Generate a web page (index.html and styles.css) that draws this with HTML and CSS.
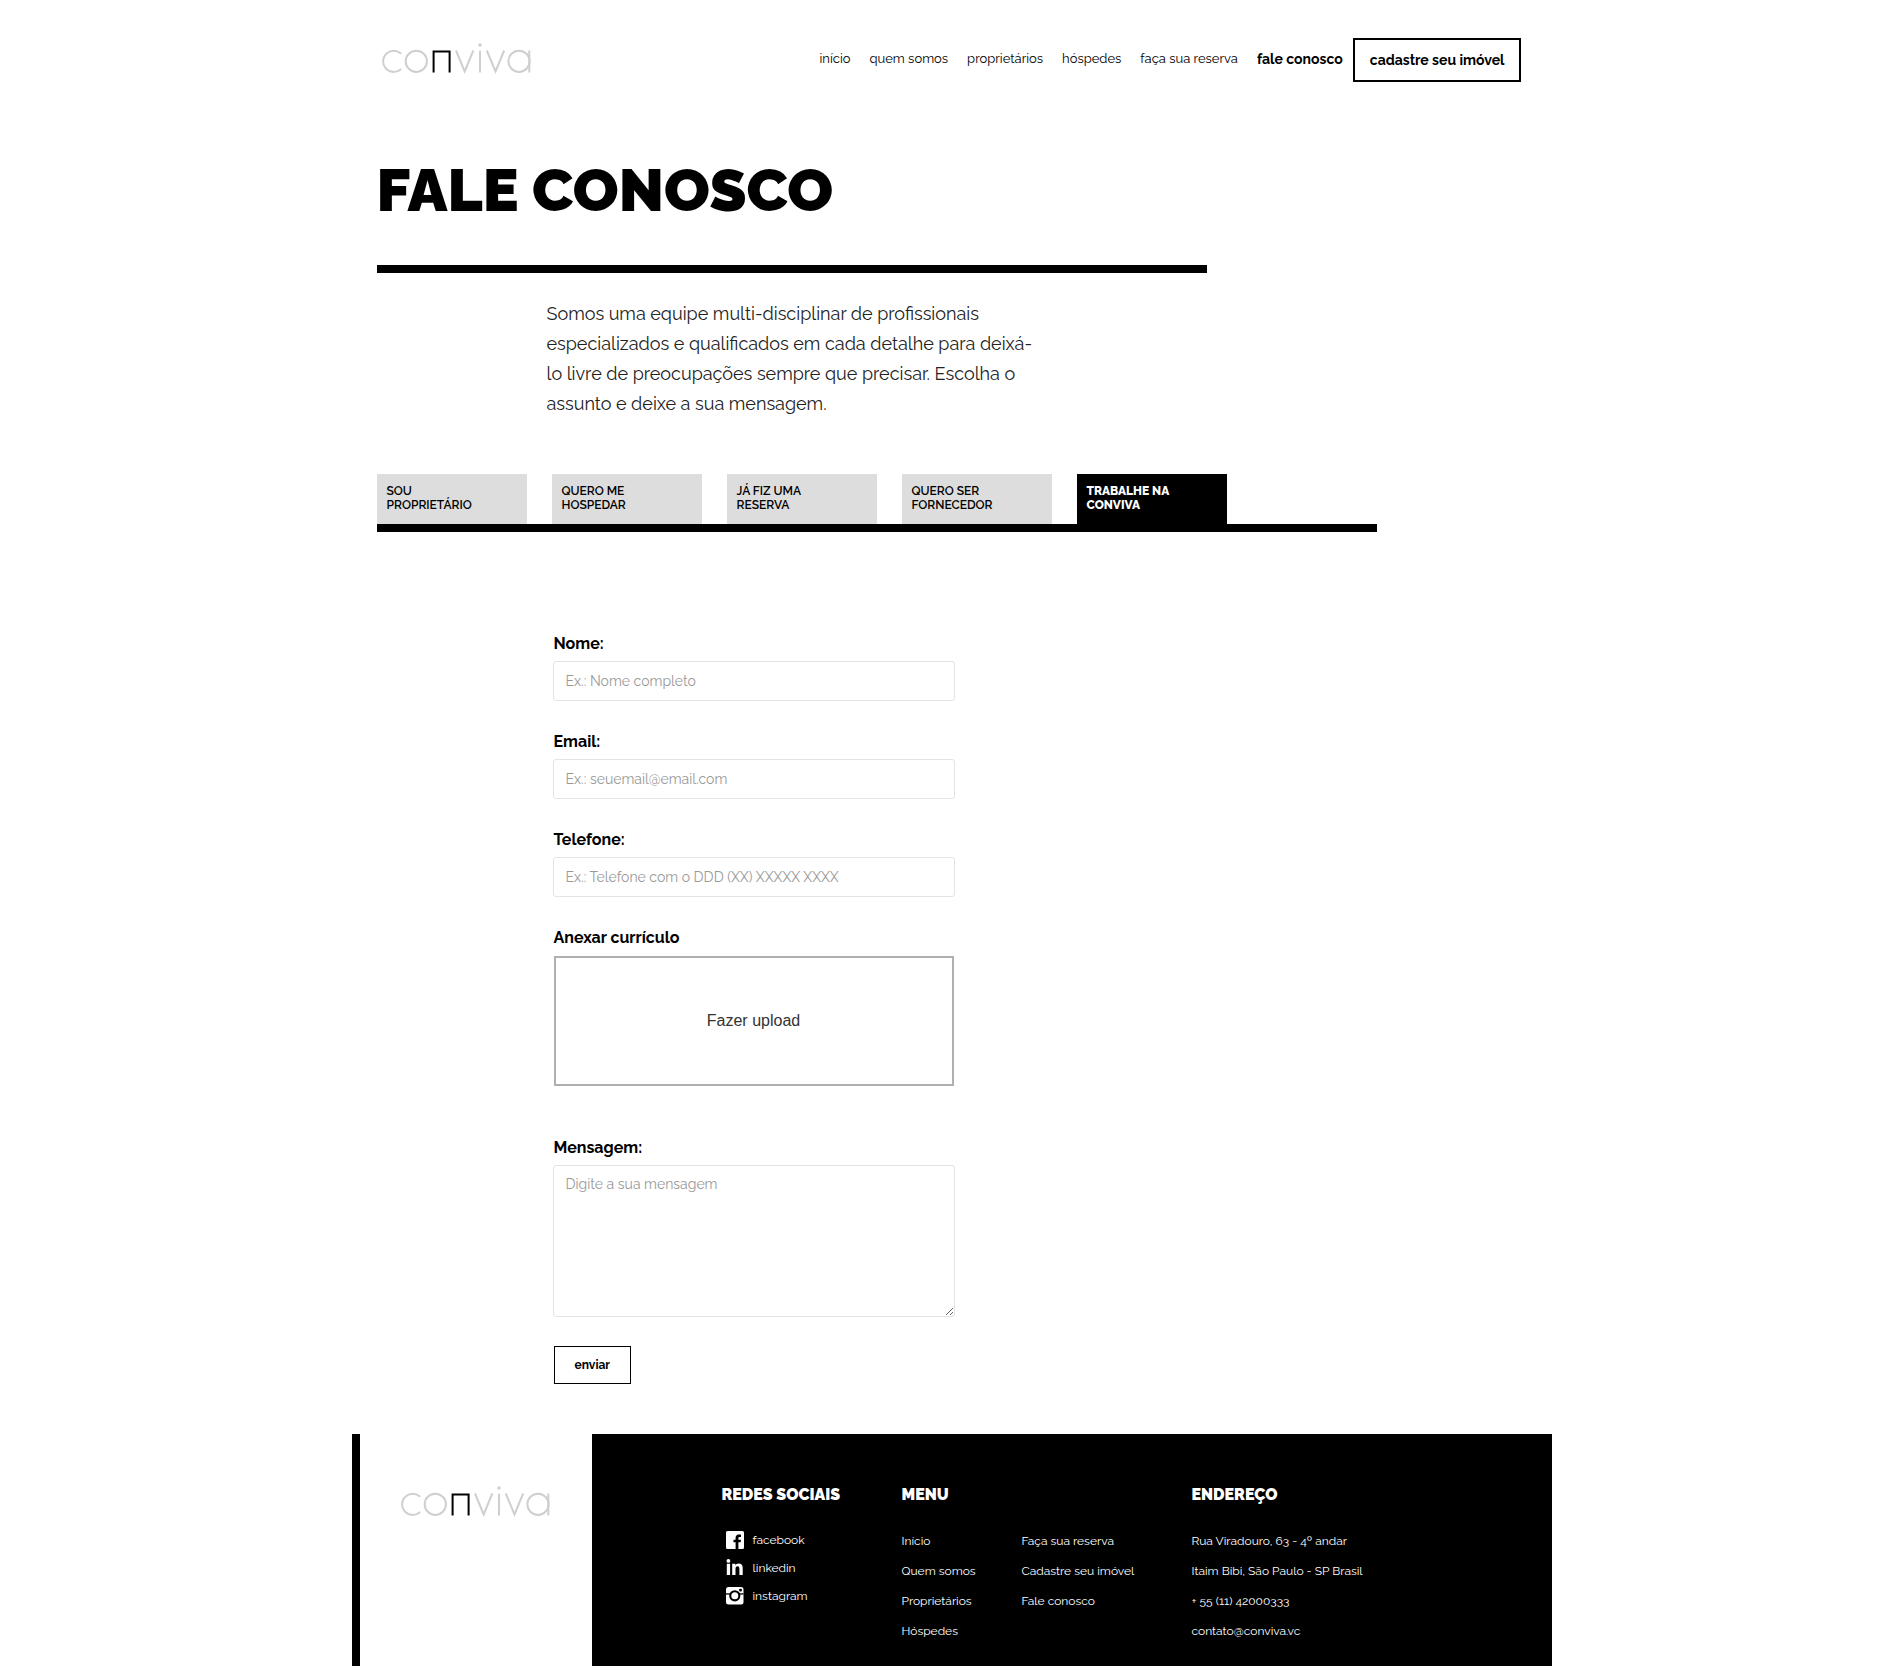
FILE: index.html
```html
<!DOCTYPE html>
<html lang="pt-BR">
<head>
  <meta charset="utf-8">
  <meta name="viewport" content="width=device-width, initial-scale=1">
  <title>Fale conosco</title>
  <link rel="stylesheet" href="styles.css">
</head>
<body>
  <svg class="sprite" aria-hidden="true">
    <symbol id="logo" viewBox="0 0 150 31">
      <g fill="none" stroke="#cfcfcf" stroke-width="2">
        <circle cx="11.7" cy="18.3" r="10.6" stroke-dasharray="260 100" pathLength="360" transform="rotate(50 11.7 18.3)" stroke-linecap="round"/>
        <circle cx="34.3" cy="18.3" r="10.6"/>
        <polyline points="74,7.5 82.7,28.5 91.3,7.5"/>
        <line x1="98" y1="7.7" x2="98" y2="29.5"/>
        <polyline points="104.8,7.5 113.5,28.5 122.2,7.5"/>
        <circle cx="137" cy="18.3" r="10.6"/>
        <line x1="147.3" y1="7.5" x2="147.3" y2="29.5"/>
      </g>
      <circle cx="98" cy="2" r="1.7" fill="#cfcfcf"/>
      <polyline points="51.6,29.5 51.6,8.4 67.6,8.4 67.6,29.5" fill="none" stroke="#000" stroke-width="2"/>
    </symbol>
  </svg>

  <div class="page">
    <header class="header">
      <a class="logo" href="#" aria-label="conviva"><svg width="150" height="31"><use href="#logo"/></svg></a>
      <nav class="nav">
        <a href="#">início</a>
        <a href="#">quem somos</a>
        <a href="#">proprietários</a>
        <a href="#">hóspedes</a>
        <a href="#">faça sua reserva</a>
        <a class="current" href="#">fale conosco</a>
        <a class="cta" href="#">cadastre seu imóvel</a>
      </nav>
    </header>

    <main class="main">
      <h1 class="title">FALE CONOSCO</h1>
      <p class="intro">Somos uma equipe multi-disciplinar de profissionais especializados e qualificados em cada detalhe para deixá-lo livre de preocupações sempre que precisar. Escolha o assunto e deixe a sua mensagem.</p>

      <div class="tabs">
        <button class="tab" type="button">SOU<br>PROPRIETÁRIO</button>
        <button class="tab" type="button">QUERO ME<br>HOSPEDAR</button>
        <button class="tab" type="button">JÁ FIZ UMA<br>RESERVA</button>
        <button class="tab" type="button">QUERO SER<br>FORNECEDOR</button>
        <button class="tab active" type="button">TRABALHE NA<br>CONVIVA</button>
      </div>

      <form class="form">
        <div class="field">
          <label for="nome">Nome:</label>
          <input id="nome" type="text" placeholder="Ex.: Nome completo">
        </div>
        <div class="field">
          <label for="email">Email:</label>
          <input id="email" type="email" placeholder="Ex.: seuemail@email.com">
        </div>
        <div class="field">
          <label for="telefone">Telefone:</label>
          <input id="telefone" type="tel" placeholder="Ex.: Telefone com o DDD (XX) XXXXX XXXX">
        </div>
        <div class="field attach">
          <label for="upload">Anexar currículo</label>
          <button id="upload" class="upload" type="button">Fazer upload</button>
        </div>
        <div class="field message">
          <label for="mensagem">Mensagem:</label>
          <textarea id="mensagem" placeholder="Digite a sua mensagem"></textarea>
        </div>
        <button class="send" type="submit">enviar</button>
      </form>
    </main>

    <footer class="footer">
      <div class="brand"><svg width="150" height="31" role="img" aria-label="conviva"><use href="#logo"/></svg></div>
      <section class="col social">
        <h2>REDES SOCIAIS</h2>
        <ul>
          <li><a href="#">
            <svg width="18" height="18" viewBox="0 0 18 18"><path fill="#fff" fill-rule="evenodd" d="M1.500 0h15A1.500 1.500 0 0 1 18 1.500v15a1.500 1.500 0 0 1-1.500 1.500H12.400V11.300h2.200l.4-2.500h-2.600V7.200c0-.8.400-1.200 1.200-1.200H15V3.500h-2.200C10.700 3.500 9.600 4.800 9.600 6.800v2H7.500v2.500h2.100V18H1.500A1.500 1.500 0 0 1 0 16.500v-15A1.500 1.500 0 0 1 1.500 0z"/></svg>
            facebook</a></li>
          <li><a href="#">
            <svg width="18" height="18" viewBox="0 0 18 18"><g fill="#fff"><circle cx="2.400" cy="1.900" r="1.900"/><path d="M.8 4.700h3.300V16H.8zM6.200 4.700h3.100v1.500c.6-1 1.700-1.800 3.300-1.800 3 0 4.100 1.900 4.100 4.900V16h-3.300v-5.900c0-1.700-.5-2.800-1.800-2.800-1.500 0-2.100 1.100-2.100 2.800V16H6.200z"/></g></svg>
            linkedin</a></li>
          <li><a href="#">
            <svg width="18" height="18" viewBox="0 0 18 18"><rect x="0" y="0" width="17.500" height="17.500" rx="2.500" fill="#fff"/><path d="M0 6.300h17.500v1.300H0z" fill="#000"/><circle cx="8.800" cy="8.800" r="5.600" fill="#000"/><circle cx="8.800" cy="8.800" r="3.500" fill="#fff"/><rect x="13.200" y="1.700" width="2.700" height="2.700" rx=".8" fill="#000"/></svg>
            instagram</a></li>
        </ul>
      </section>
      <section class="col menu">
        <h2>MENU</h2>
        <div class="menu-lists">
          <ul>
            <li><a href="#">Início</a></li>
            <li><a href="#">Quem somos</a></li>
            <li><a href="#">Proprietários</a></li>
            <li><a href="#">Hóspedes</a></li>
          </ul>
          <ul>
            <li><a href="#">Faça sua reserva</a></li>
            <li><a href="#">Cadastre seu imóvel</a></li>
            <li><a href="#">Fale conosco</a></li>
          </ul>
        </div>
      </section>
      <section class="col address">
        <h2>ENDEREÇO</h2>
        <ul>
          <li>Rua Viradouro, 63 - 4º andar</li>
          <li>Itaim Bibi, São Paulo - SP Brasil</li>
          <li>+ 55 (11) 42000333</li>
          <li><a href="#">contato@conviva.vc</a></li>
        </ul>
      </section>
    </footer>
  </div>
</body>
</html>
```
FILE: styles.css
```css
* {
  box-sizing: border-box;
}

body {
  margin: 0;
  background: #fff;
  color: #000;
  font-family: Raleway, Inter, "Liberation Sans", sans-serif;
}

a {
  color: inherit;
  text-decoration: none;
}

h1, h2, p, ul {
  margin: 0;
  padding: 0;
}

ul {
  list-style: none;
}

svg {
  display: block;
  flex: none;
}

.sprite {
  position: absolute;
  width: 0;
  height: 0;
}

.page {
  max-width: 1200px;
  margin: 0 auto;
  padding-bottom: 8px;
}

/* Header */
.header {
  display: flex;
  justify-content: space-between;
  align-items: center;
  padding: 38px 31px 0 30px;
}

.logo {
  padding-bottom: 4px;
}

.nav {
  display: flex;
  align-items: center;
  gap: 19px;
  font-size: 13px;
  font-weight: 400;
  line-height: 20px;
}

.nav a {
  padding-bottom: 2px;
}

.nav .current {
  margin-right: -9px;
  font-size: 14px;
  font-weight: 700;
}

.nav .cta {
  padding: 10px 14px 10px 15px;
  border: 2px solid #000;
  font-size: 14px;
  font-weight: 700;
}

/* Content */
.main {
  padding: 0 25px;
}

.title {
  max-width: 830px;
  padding: 72px 0 39px;
  border-bottom: 8px solid #000;
  font-size: 60px;
  font-weight: 900;
  line-height: 72px;
}

.intro {
  max-width: 490px;
  margin: 26px 0 55px 170px;
  color: #222;
  font-size: 18px;
  font-weight: 400;
  line-height: 30px;
}

.tabs {
  display: flex;
  gap: 25px;
  max-width: 1000px;
  border-bottom: 8px solid #000;
}

.tab {
  width: 150px;
  height: 50px;
  padding: 0 10px 2px;
  border: 0;
  background: #ddd;
  color: #000;
  font-family: inherit;
  font-size: 12px;
  font-weight: 600;
  line-height: 14px;
  text-align: left;
}

.tab.active {
  background: #000;
  color: #fff;
  font-weight: 800;
}

/* Form */
.form {
  max-width: 402px;
  margin: 102px 0 50px 176px;
}

.field {
  margin-bottom: 31px;
}

.field label {
  display: block;
  margin: 0 1px 7px;
  font-size: 16px;
  font-weight: 700;
  line-height: 20px;
}

.field input,
.field textarea {
  display: block;
  width: 100%;
  border: 1px solid #e3e3e3;
  border-radius: 3px;
  background: #fff;
  font-family: inherit;
  font-size: 14px;
  font-weight: 400;
  line-height: 18px;
}

.field input {
  height: 40px;
  padding: 0 12px;
}

.field textarea {
  height: 152px;
  padding: 9px 12px;
  resize: vertical;
}

::placeholder {
  color: #999;
  opacity: 1;
}

.field.attach {
  margin-bottom: 52px;
}

.field.message {
  margin-bottom: 29px;
}

.upload {
  display: block;
  width: calc(100% - 2px);
  height: 130px;
  margin: 8px 1px 0;
  border: 2px solid #b0b0b0;
  background: #fff;
  color: #333;
  font-family: "Liberation Sans", Arial, sans-serif;
  font-size: 16px;
}

.send {
  height: 38px;
  margin-left: 1px;
  padding: 0 20px;
  border: 1px solid #000;
  background: #fff;
  color: #000;
  font-family: inherit;
  font-size: 12px;
  font-weight: 700;
}

/* Footer */
.footer {
  display: flex;
  min-height: 232px;
  border-left: 8px solid #000;
  background: #000;
  color: #fff;
  font-size: 12px;
  font-weight: 400;
}

.brand {
  flex: none;
  width: 232px;
  padding: 52px 41px;
  background: #fff;
}

.col {
  flex: none;
  padding-top: 51px;
}

.col h2 {
  margin-bottom: 21px;
  font-size: 16px;
  font-weight: 900;
  line-height: 20px;
}

.col li {
  line-height: 30px;
}

.social {
  width: 180px;
  margin-left: 130px;
}

.social li a {
  display: flex;
  align-items: center;
  gap: 9px;
  height: 28px;
  padding-left: 4px;
}

.menu {
  width: 290px;
}

.menu-lists {
  display: flex;
}

.menu-lists ul {
  min-width: 120px;
}
```
